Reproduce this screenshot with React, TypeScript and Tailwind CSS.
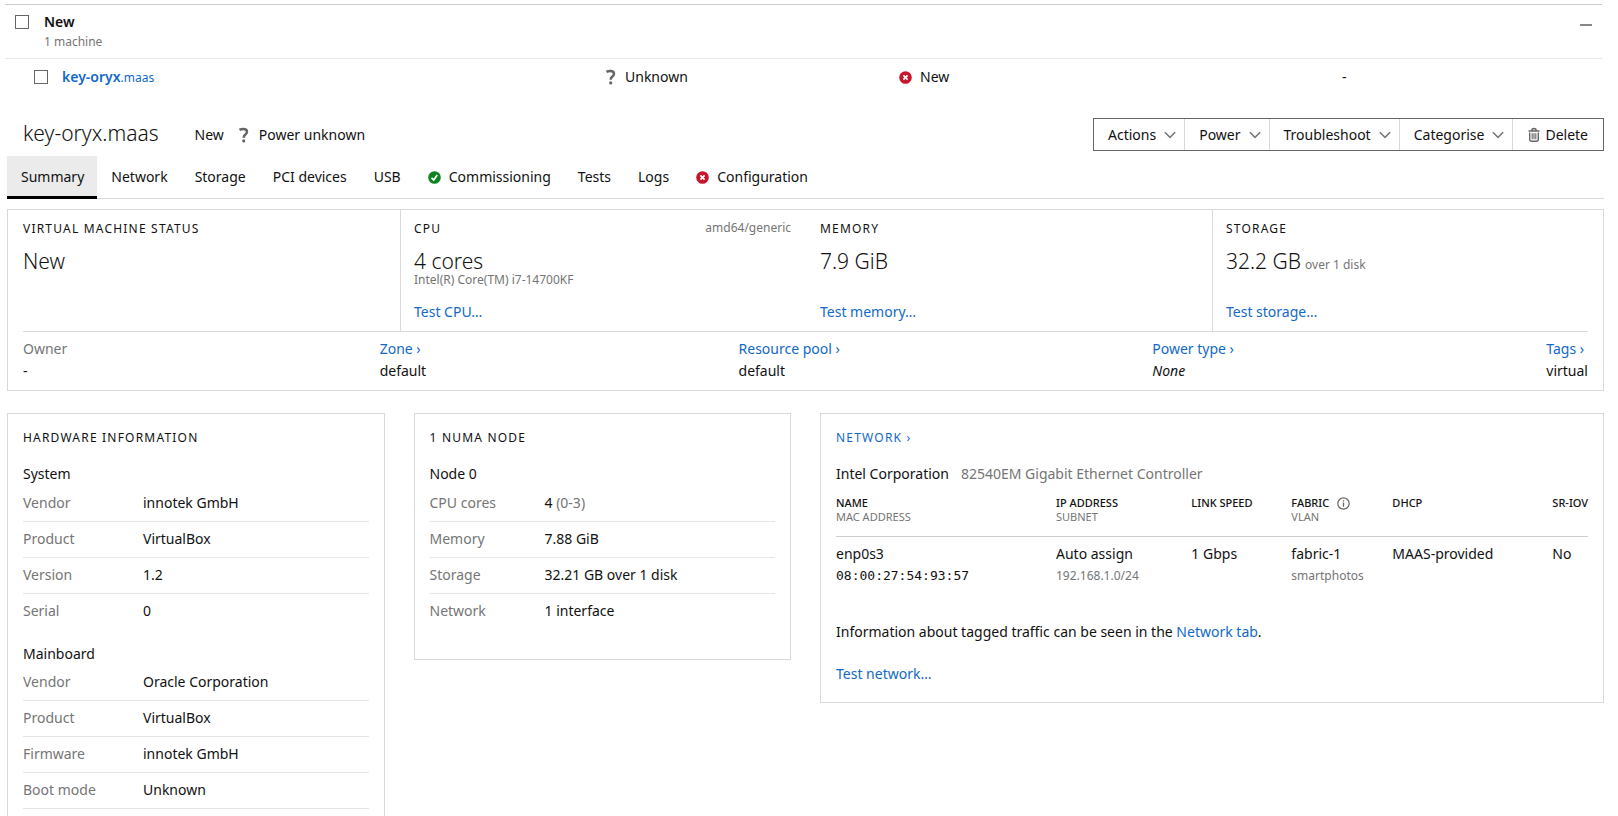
import type { ReactNode } from "react";

const link = "text-[#1269c7] hover:underline";
const muted = "text-[#757575]";
const rule = "border-[#d9d9d9]";

function QuestionIcon() {
  return (
    <svg className="size-4 shrink-0" viewBox="0 0 16 16" fill="none" aria-hidden="true">
      <path d="M3.500 2.900C4.600 2.200 5.900 1.900 7.300 1.900c2.300 0 3.700 1 3.700 2.800 0 1.600-1 2.300-1.900 3.100C8.200 8.600 7.700 9.200 7.700 10.700" stroke="#666" strokeWidth="2.500" />
      <circle cx="7.700" cy="13.900" r="1.600" fill="#666" />
    </svg>
  );
}

function ErrorIcon() {
  return (
    <svg className="size-[13px] shrink-0" viewBox="0 0 13 13" fill="none" aria-hidden="true">
      <circle cx="6.500" cy="6.500" r="6.300" fill="#c7162b" />
      <path d="M4.400 4.400l4.200 4.200M8.600 4.400L4.400 8.600" stroke="#fff" strokeWidth="1.700" />
    </svg>
  );
}

function SuccessIcon() {
  return (
    <svg className="size-[13px] shrink-0" viewBox="0 0 13 13" fill="none" aria-hidden="true">
      <circle cx="6.500" cy="6.500" r="6.300" fill="#0e8420" />
      <path d="M3.500 6.900l2.200 2L9.300 3.900" stroke="#fff" strokeWidth="1.700" />
    </svg>
  );
}

function ChevronIcon() {
  return (
    <svg className="h-2 w-3 shrink-0" viewBox="0 0 12 8" fill="none" aria-hidden="true">
      <path d="M0.800 1.200L6 6.400l5.200-5.200" stroke="#777" strokeWidth="1.500" />
    </svg>
  );
}

function TrashIcon() {
  return (
    <svg className="h-4 w-3 shrink-0" viewBox="0 0 12 16" fill="none" stroke="#666" aria-hidden="true">
      <path d="M0.500 4h11M3.800 3.800c0-1.600.7-2.300 2.200-2.300s2.200.7 2.200 2.300" strokeWidth="1.500" />
      <path d="M1.700 5.500v6.800c0 1.300.7 2 1.900 2h4.800c1.200 0 1.900-.7 1.900-2V5.500" strokeWidth="1.400" />
      <path d="M4.200 6.200v6M6 6.200v6M7.800 6.200v6" strokeWidth="1.100" />
    </svg>
  );
}

function InfoIcon() {
  return (
    <svg className="size-[13px] shrink-0" viewBox="0 0 13 13" fill="none" aria-hidden="true">
      <circle cx="6.500" cy="6.500" r="5.700" stroke="#666" strokeWidth="1.200" />
      <path d="M6.500 5.500v4.300M6.500 3.200v1.400" stroke="#666" strokeWidth="1.300" />
    </svg>
  );
}

function Checkbox({ label }: { label: string }) {
  return (
    <input
      type="checkbox"
      aria-label={label}
      className="size-[14px] shrink-0 appearance-none border border-[#666] bg-white checked:bg-[#0066cc]"
    />
  );
}

function Caption({ children }: { children: ReactNode }) {
  return <h2 className="text-xs leading-[18px] tracking-widest uppercase">{children}</h2>;
}

const tabs: { name: string; icon?: ReactNode }[] = [
  { name: "Summary" },
  { name: "Network" },
  { name: "Storage" },
  { name: "PCI devices" },
  { name: "USB" },
  { name: "Commissioning", icon: <SuccessIcon /> },
  { name: "Tests" },
  { name: "Logs" },
  { name: "Configuration", icon: <ErrorIcon /> },
];

const menus = ["Actions", "Power", "Troubleshoot", "Categorise"];

const details: { label: string; value: string; href?: string; italic?: boolean }[] = [
  { label: "Owner", value: "-" },
  { label: "Zone", value: "default", href: "#zone" },
  { label: "Resource pool", value: "default", href: "#pool" },
  { label: "Power type", value: "None", href: "#power", italic: true },
  { label: "Tags", value: "virtual", href: "#tags" },
];

function Facts({
  rows,
  labelWidth,
  closed = false,
}: {
  rows: [string, ReactNode][];
  labelWidth: string;
  closed?: boolean;
}) {
  return (
    <dl>
      {rows.map(([label, value], i) => (
        <div
          key={label}
          className={`flex border-b pt-[6px] pb-[7px] ${
            closed || i < rows.length - 1 ? "border-[#e5e5e5]" : "border-transparent"
          }`}
        >
          <dt className={`${labelWidth} ${muted} shrink-0`}>{label}</dt>
          <dd>{value}</dd>
        </div>
      ))}
    </dl>
  );
}

export default function App() {
  return (
    <div className="h-screen overflow-hidden bg-white pt-1 font-['Noto_Sans',sans-serif] text-sm leading-[22px] text-[#111]">
      <section className="mr-4 ml-[5px] border-t border-[#cdcdcd]">
        <div className="flex gap-[15px] border-b border-[#e5e5e5] px-[10px] pt-[6px] pb-[7px]">
          <span className="flex h-[22px] items-center">
            <Checkbox label="Select all New machines" />
          </span>
          <div className="flex-1">
            <p className="font-semibold">New</p>
            <p className={`text-xs leading-[18px] ${muted}`}>1 machine</p>
          </div>
          <button type="button" aria-label="Collapse group" className="flex h-7 w-3 items-center">
            <span className="h-[2px] w-full bg-[#888]" />
          </button>
        </div>
        <div className="grid grid-cols-[598fr_294fr_442fr_263fr] items-center py-[7px]">
          <div className="flex items-center gap-[14px] pl-[29px]">
            <Checkbox label="Select key-oryx.maas" />
            <a href="#key-oryx" className={link}>
              <span className="font-semibold">key-oryx</span>
              <span className="text-xs">.maas</span>
            </a>
          </div>
          <div className="flex items-center gap-[6px]">
            <QuestionIcon />
            Unknown
          </div>
          <div className="flex items-center gap-2 pl-[2px]">
            <ErrorIcon />
            New
          </div>
          <div className="pl-[3px]">-</div>
        </div>
      </section>

      <div className="mr-[14px] ml-[7px]">
        <header className="mt-[23px] flex h-[33px] items-center pl-4">
          <h1 className="mr-9 pb-1 text-[21px] font-light">key-oryx.maas</h1>
          <span className="mr-3">New</span>
          <span className="mr-[7px]">
            <QuestionIcon />
          </span>
          <span>Power unknown</span>
          <div className="ml-auto flex h-full border border-[#666]">
            {menus.map((menu) => (
              <button
                key={menu}
                type="button"
                className={`flex items-center gap-2 border-r ${rule} pr-2 pl-[14px]`}
              >
                {menu}
                <ChevronIcon />
              </button>
            ))}
            <button type="button" className="flex items-center gap-[5px] px-[15px]">
              <TrashIcon />
              Delete
            </button>
          </div>
        </header>

        <nav className={`mt-[5px] flex border-b ${rule}`}>
          {tabs.map((tab, i) => (
            <a
              key={tab.name}
              href={`#${tab.name}`}
              className={`-mb-px flex items-center gap-2 border-b-[3px] pt-[10px] pr-[13px] pb-2 pl-[14px] ${
                i === 0 ? "border-black bg-[#ebebeb]" : "border-transparent"
              }`}
            >
              {tab.icon}
              {tab.name}
            </a>
          ))}
        </nav>

        <section className={`mt-[10px] border ${rule}`}>
          <div className="grid grid-cols-4 gap-x-[29px]">
            <div className="pt-[10px] pb-2 pl-[15px]">
              <Caption>Virtual machine status</Caption>
              <p className="mt-[11px] text-[21px] leading-6 font-light">New</p>
            </div>
            <div className={`-ml-[14px] flex flex-col border-l ${rule} pt-[10px] pb-2 pl-[13px]`}>
              <div className="flex justify-between">
                <Caption>CPU</Caption>
                <span className={`text-xs leading-[16px] ${muted}`}>amd64/generic</span>
              </div>
              <p className="mt-[11px] text-[21px] leading-6 font-light">4 cores</p>
              <p className={`text-xs leading-[14px] ${muted}`}>Intel(R) Core(TM) i7-14700KF</p>
              <a href="#test-cpu" className={`${link} mt-[14px] self-start`}>Test CPU…</a>
            </div>
            <div className="flex flex-col pt-[10px] pb-2">
              <Caption>Memory</Caption>
              <p className="mt-[11px] text-[21px] leading-6 font-light">7.9 GiB</p>
              <a href="#test-memory" className={`${link} mt-auto self-start`}>Test memory…</a>
            </div>
            <div className={`-ml-[14px] flex flex-col border-l ${rule} pt-[10px] pb-2 pl-[13px]`}>
              <Caption>Storage</Caption>
              <p className="mt-[11px] text-[21px] leading-6 font-light">
                32.2 GB
                <span className={`ml-1 text-xs font-normal ${muted}`}>over 1 disk</span>
              </p>
              <a href="#test-storage" className={`${link} mt-auto self-start`}>Test storage…</a>
            </div>
          </div>
          <dl className={`mx-[15px] flex justify-between border-t ${rule} pt-[6px] pb-2`}>
            {details.map((item) => (
              <div key={item.label}>
                <dt className={muted}>
                  {item.href ? <a href={item.href} className={link}>{item.label} ›</a> : item.label}
                </dt>
                <dd className={item.italic ? "italic" : ""}>{item.value}</dd>
              </div>
            ))}
          </dl>
        </section>

        <div className="mt-[22px] grid grid-cols-4 items-start gap-x-[29px]">
          <section className={`border ${rule} px-[15px] pt-[15px] pb-14`}>
            <Caption>Hardware information</Caption>
            <h3 className="mt-4 mb-px">System</h3>
            <Facts
              labelWidth="w-[120px]"
              rows={[
                ["Vendor", "innotek GmbH"],
                ["Product", "VirtualBox"],
                ["Version", "1.2"],
                ["Serial", "0"],
              ]}
            />
            <h3 className="mt-[13px]">Mainboard</h3>
            <Facts
              closed
              labelWidth="w-[120px]"
              rows={[
                ["Vendor", "Oracle Corporation"],
                ["Product", "VirtualBox"],
                ["Firmware", "innotek GmbH"],
                ["Boot mode", "Unknown"],
              ]}
            />
          </section>

          <section className={`border ${rule} px-[15px] pt-[15px] pb-[29px]`}>
            <Caption>1 NUMA node</Caption>
            <h3 className="mt-4 mb-px">Node 0</h3>
            <Facts
              labelWidth="w-[115px]"
              rows={[
                ["CPU cores", <>4 <span className={muted}>(0-3)</span></>],
                ["Memory", "7.88 GiB"],
                ["Storage", "32.21 GB over 1 disk"],
                ["Network", "1 interface"],
              ]}
            />
          </section>

          <section className={`col-span-2 border ${rule} px-[15px] pt-[15px] pb-[17px]`}>
            <Caption>
              <a href="#network" className={link}>Network ›</a>
            </Caption>
            <h3 className="mt-4 mb-px flex gap-3">
              Intel Corporation
              <span className={muted}>82540EM Gigabit Ethernet Controller</span>
            </h3>
            <table className="w-full table-fixed text-left">
              <colgroup>
                <col className="w-[220px]" />
                <col className="w-[18%]" />
                <col className="w-[100px]" />
                <col className="w-[101px]" />
                <col className="w-[160px]" />
                <col />
              </colgroup>
              <thead className="text-[11px] leading-[14px]">
                <tr className="border-b border-[#cdcdcd] align-top">
                  <th className="pt-[10px] pb-3 font-medium">
                    NAME
                    <div className={`font-normal ${muted}`}>MAC ADDRESS</div>
                  </th>
                  <th className="pt-[10px] pb-3 font-medium">
                    IP ADDRESS
                    <div className={`font-normal ${muted}`}>SUBNET</div>
                  </th>
                  <th className="pt-[10px] pb-3 font-medium">LINK SPEED</th>
                  <th className="pt-[10px] pb-3 font-medium">
                    <span className="flex items-center gap-2">
                      FABRIC
                      <InfoIcon />
                    </span>
                    <div className={`font-normal ${muted}`}>VLAN</div>
                  </th>
                  <th className="pt-[10px] pb-3 font-medium">DHCP</th>
                  <th className="pt-[10px] pb-3 font-medium whitespace-nowrap">SR-IOV</th>
                </tr>
              </thead>
              <tbody>
                <tr className="align-top">
                  <td className="pt-[6px]">
                    enp0s3
                    <div className="font-['DejaVu_Sans_Mono',monospace] text-[13px]">08:00:27:54:93:57</div>
                  </td>
                  <td className="pt-[6px]">
                    Auto assign
                    <div className={`text-xs leading-[22px] ${muted}`}>192.168.1.0/24</div>
                  </td>
                  <td className="pt-[6px]">1 Gbps</td>
                  <td className="pt-[6px]">
                    fabric-1
                    <div className={`text-xs leading-[22px] ${muted}`}>smartphotos</div>
                  </td>
                  <td className="pt-[6px]">MAAS-provided</td>
                  <td className="pt-[6px]">No</td>
                </tr>
              </tbody>
            </table>
            <p className="mt-[34px]">
              Information about tagged traffic can be seen in the{" "}
              <a href="#network" className={link}>Network tab</a>.
            </p>
            <p className="mt-5">
              <a href="#test-network" className={link}>Test network…</a>
            </p>
          </section>
        </div>
      </div>
    </div>
  );
}
